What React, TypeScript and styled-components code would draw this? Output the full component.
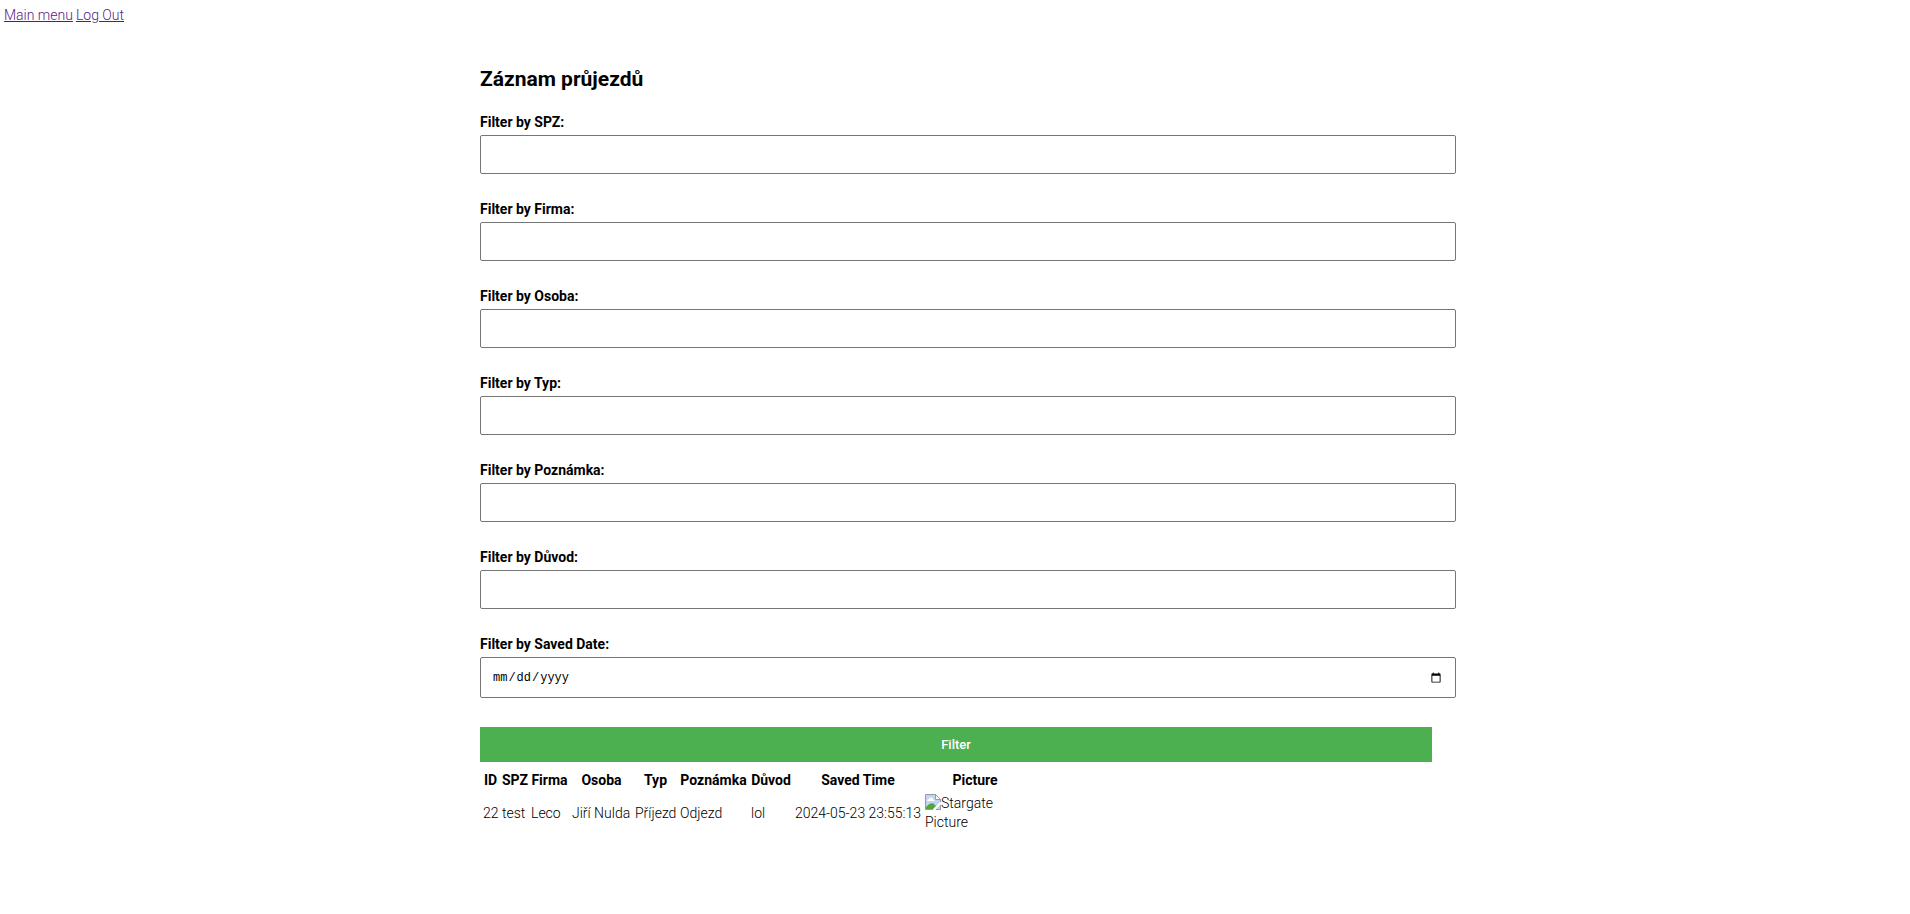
import React from "react";
import styled, { createGlobalStyle } from "styled-components";

const GlobalStyle = createGlobalStyle`
  body {
    margin: 4px 2px 4px 4px;
    background: #fff;
    color: #000;
    font-family: Roboto, "Liberation Sans", sans-serif;
    font-size: 14px;
    font-weight: 300;
    line-height: 19px;
  }
`;

const Nav = styled.nav`
  display: flex;
  gap: 3px;
  padding-top: 2px;
`;

const NavLink = styled.a`
  color: #551a8b;
  text-decoration: underline;
`;

const Container = styled.main`
  width: 50%;
  margin: 40px auto 0;
`;

const Title = styled.h2`
  margin: 0 0 19px;
  font-size: 21px;
  font-weight: 700;
  line-height: 29px;
`;

const FilterForm = styled.form`
  display: flex;
  flex-direction: column;
`;

const Label = styled.label`
  margin-bottom: 3px;
  font-weight: 700;
`;

const Field = styled.input`
  box-sizing: border-box;
  width: calc(100% + 24px);
  height: ${(p) => (p.type === "date" ? 41 : 39)}px;
  margin: 0 0 ${(p) => (p.type === "date" ? 29 : 26)}px;
  padding: 10px 11px;
  border: 1px solid #767676;
  border-radius: 2px;
  background: #fff;
  font-family: "Liberation Mono", monospace;
  font-size: 12px;
`;

const SubmitButton = styled.button`
  height: 35px;
  padding: 0;
  border: 0;
  background: #4caf50;
  color: #fff;
  font-family: inherit;
  font-size: 13px;
  font-weight: 500;
`;

const Records = styled.table`
  table-layout: fixed;
  width: 546px;
  margin-top: 6px;
  border-spacing: 2px;
  white-space: nowrap;

  th,
  td {
    padding: 1px;
  }

  th {
    font-weight: 700;
    text-align: center;
  }
`;

const Col = styled.col<{ $width: number }>`
  width: ${(p) => p.$width}px;
`;

const MissingPicture = styled.span`
  display: block;
  width: 100px;
  white-space: normal;

  svg {
    display: inline-block;
    vertical-align: top;
  }
`;

const filters = [
  { id: "spz", label: "Filter by SPZ:", type: "text" },
  { id: "firma", label: "Filter by Firma:", type: "text" },
  { id: "osoba", label: "Filter by Osoba:", type: "text" },
  { id: "typ", label: "Filter by Typ:", type: "text" },
  { id: "poznamka", label: "Filter by Poznámka:", type: "text" },
  { id: "duvod", label: "Filter by Důvod:", type: "text" },
  { id: "saved-date", label: "Filter by Saved Date:", type: "date" },
];

const columns = [
  { name: "ID", width: 17 },
  { name: "SPZ", width: 27 },
  { name: "Firma", width: 39 },
  { name: "Osoba", width: 61 },
  { name: "Typ", width: 43 },
  { name: "Poznámka", width: 69 },
  { name: "Důvod", width: 42 },
  { name: "Saved Time", width: 128 },
  { name: "Picture", width: 102 },
];

const records = [
  ["22", "test", "Leco", "Jiří Nulda", "Příjezd", "Odjezd", "lol", "2024-05-23 23:55:13"],
];

function BrokenImageIcon() {
  return (
    <svg width="16" height="16" viewBox="0 0 16 16" aria-hidden="true">
      <path d="M.5 .5H10.5L15.5 5.5V8L8 15.5H.5Z" fill="#c3d5f5" />
      <path d="M2 7Q2 5 4 5Q4.500 3 6 3.500Q8 3.500 8 5.500Q9.500 5.500 9.500 7Z" fill="#fff" />
      <path d="M1 15V13Q5 8 8.500 9.500L11 12L8 15Z" fill="#55a53a" />
      <path d="M8 15.500L15.500 8V10L10 15.500Z" fill="#fff" />
      <path d="M10.500 15.500L15.500 10.500V15.500Z" fill="#c3d5f5" />
      <path d="M10.500 .5V5.500H15.500Z" fill="#fff" />
      <path
        d="M8 15.500H.5V.5H10.500L15.500 5.500V8M10.500 .5V5.500H15.500M15.500 11V15.500H11"
        fill="none"
        stroke="#9a9a9a"
      />
    </svg>
  );
}

export default function App() {
  return (
    <>
      <GlobalStyle />
      <Nav>
        <NavLink href="#menu">Main menu</NavLink>
        <NavLink href="#logout">Log Out</NavLink>
      </Nav>
      <Container>
        <Title>Záznam průjezdů</Title>
        <FilterForm onSubmit={(e) => e.preventDefault()}>
          {filters.map((f) => (
            <React.Fragment key={f.id}>
              <Label htmlFor={f.id}>{f.label}</Label>
              <Field id={f.id} name={f.id} type={f.type} />
            </React.Fragment>
          ))}
          <SubmitButton type="submit">Filter</SubmitButton>
        </FilterForm>
        <Records>
          <colgroup>
            {columns.map((c) => (
              <Col key={c.name} $width={c.width} />
            ))}
          </colgroup>
          <thead>
            <tr>
              {columns.map((c) => (
                <th key={c.name} scope="col">
                  {c.name}
                </th>
              ))}
            </tr>
          </thead>
          <tbody>
            {records.map((r) => (
              <tr key={r[0]}>
                {r.map((value, i) => (
                  <td key={columns[i].name}>{value}</td>
                ))}
                <td>
                  <MissingPicture>
                    <BrokenImageIcon />
                    Stargate Picture
                  </MissingPicture>
                </td>
              </tr>
            ))}
          </tbody>
        </Records>
      </Container>
    </>
  );
}
